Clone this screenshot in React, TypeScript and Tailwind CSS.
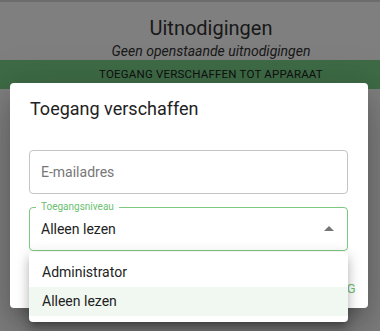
import React from 'react';

const App = () => {
  return (
    <div className="relative w-[380px] h-[331px] overflow-hidden bg-white font-['Roboto',sans-serif]">
      {/* Page behind the dialog */}
      <div className="h-[2px] bg-[#d8d8d8]"></div>
      <div className="flex flex-col items-center pl-[42px] pt-[14px]">
        <h1 className="text-[20px] leading-[24px] text-[#333333]">Uitnodigingen</h1>
        <p className="mt-[2px] text-[14px] leading-[18px] italic text-[#333333]">Geen openstaande uitnodigingen</p>
      </div>
      <div className="h-[29px] bg-[#7dd68d] flex items-center justify-center pl-[42px]">
        <span className="text-[11.5px] uppercase tracking-[0.2px] text-[#222222]">Toegang verschaffen tot apparaat</span>
      </div>

      {/* Backdrop */}
      <div className="absolute inset-0 bg-black/50"></div>

      {/* Dialog */}
      <div className="absolute left-[10px] top-[83px] w-[358px] h-[225px] bg-white rounded-[4px] shadow-[0_11px_15px_-7px_rgba(0,0,0,0.2),0_24px_38px_3px_rgba(0,0,0,0.14),0_9px_46px_8px_rgba(0,0,0,0.12)]">
        <h2 className="px-5 pt-[14px] text-[18px] leading-[24px] text-[#222222]">Toegang verschaffen</h2>
        <div className="pl-[19px] pr-5 pt-[29px] flex flex-col gap-[13px]">
          <div className="h-[44px] rounded-[4px] border border-[#c4c4c4] flex items-center px-[11px]">
            <span className="text-[14px] text-[#777777]">E-mailadres</span>
          </div>
          <div className="relative h-[44px] rounded-[4px] border-[1.5px] border-[#7cc97f] flex items-center pl-[11px] pr-[12px]">
            <span className="absolute left-[6px] -top-[7px] bg-white px-[5px] text-[10px] leading-[12px] text-[#6cc070]">Toegangsniveau</span>
            <span className="flex-1 text-[14px] text-[#222222]">Alleen lezen</span>
            <svg width="10" height="5" viewBox="0 0 10 5" className="mr-[1px] -mt-[2px]">
              <path d="M0 5 L5 0 L10 5 Z" fill="#757575" />
            </svg>
          </div>
        </div>
        <div className="flex justify-end pr-[12px] pt-[28px]">
          <span className="text-[13px] uppercase tracking-[0.4px] text-[#6cc070]">Verstuur uitnodiging</span>
        </div>
      </div>

      {/* Select menu */}
      <div className="absolute left-[29px] top-[252px] w-[319px] bg-white rounded-[4px] py-[6px] shadow-[0_5px_5px_-3px_rgba(0,0,0,0.2),0_8px_10px_1px_rgba(0,0,0,0.14),0_3px_14px_2px_rgba(0,0,0,0.12)]">
        <div className="h-[29px] flex items-center px-[13px] text-[14px] text-[#222222]">Administrator</div>
        <div className="h-[29px] flex items-center px-[13px] text-[14px] text-[#222222] bg-[#f1f8f1]">Alleen lezen</div>
      </div>
    </div>
  );
};

export default App;
